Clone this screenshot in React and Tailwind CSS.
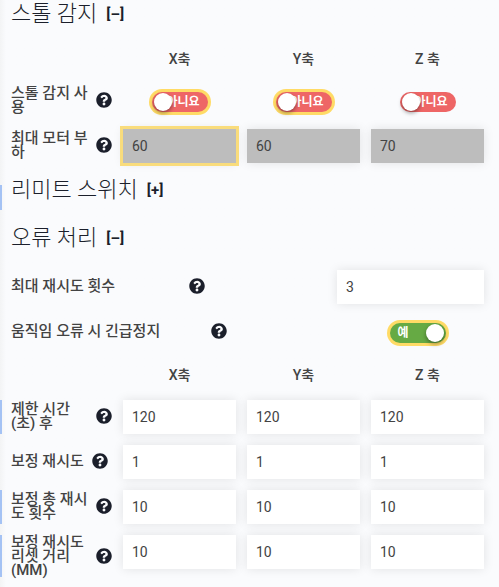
import clsx from "clsx";
import { FaQuestionCircle } from "react-icons/fa";

const AXES = ["X축", "Y축", "Z 축"];

const ROW = "border-l-2 pl-[9px] pr-[15px]";
const AXIS_GRID = "grid grid-cols-[101px_1fr_1fr_1fr] gap-x-[11px]";

function Help() {
  return (
    <button type="button" aria-label="도움말" className="shrink-0">
      <FaQuestionCircle className="block size-4 text-[#1b1f2b]" />
    </button>
  );
}

function SectionTitle({ title, open, changed, className }) {
  return (
    <div className={clsx("flex items-start gap-[9px]", className)}>
      <span className={clsx("h-[25px] w-0.5 self-end", changed && "bg-[#a4c2f4]")} />
      <button type="button" aria-expanded={open} className="flex items-center gap-[9px]">
        <h2 className="text-[22px] leading-[28px] font-light">{title}</h2>
        <span className="text-[15px] leading-[28px] font-bold">{open ? "[–]" : "[+]"}</span>
      </button>
    </div>
  );
}

function AxisHeader({ className }) {
  return (
    <div className={clsx(ROW, AXIS_GRID, "h-[34px] items-center border-transparent", className)}>
      <span />
      {AXES.map((axis) => (
        <span key={axis} className="text-center text-[14px] leading-[14px] font-medium text-[#434343]">
          {axis}
        </span>
      ))}
    </div>
  );
}

function Label({ children, className }) {
  return (
    <div className={clsx("flex min-h-[31px] items-center gap-2", className)}>
      <span className="text-[15px] leading-[14px] font-medium text-[#434343]">{children}</span>
      <Help />
    </div>
  );
}

function Field({ label, value, disabled, highlight }) {
  return (
    <input
      type="text"
      aria-label={label}
      defaultValue={value}
      disabled={disabled}
      className={clsx(
        "h-[34px] w-full min-w-0 pl-[9px] text-[14px] text-[#434343]",
        disabled ? "bg-[#bdbdbd]" : "bg-white",
        highlight
          ? "shadow-[0_0_0_3px_#f9dc7c,0_0_10px_rgba(0,0,0,0.1)]"
          : "shadow-[0_0_10px_rgba(0,0,0,0.1)]"
      )}
    />
  );
}

function Toggle({ label, on, highlight }) {
  return (
    <button
      type="button"
      role="switch"
      aria-checked={!!on}
      aria-label={label}
      className={clsx(
        "relative h-5 w-14 rounded-full text-[12px] leading-5 font-bold text-white",
        on ? "bg-[#66aa44] pl-2 text-left" : "bg-[#ee6666] pr-2 text-right",
        highlight && "shadow-[0_0_0_3px_#ffdb66]"
      )}
    >
      {on ? "예" : "아니요"}
      <span
        className={clsx(
          "absolute top-px size-[18px] rounded-full bg-white shadow-[0_2px_4px_rgba(0,0,0,0.4)]",
          on ? "right-[2px]" : "left-[2px]"
        )}
      />
    </button>
  );
}

function AxisRow({ label, values, disabled, highlight = [], changed, className }) {
  return (
    <div
      className={clsx(
        ROW,
        AXIS_GRID,
        "min-h-[34px] items-start",
        changed ? "border-[#a4c2f4]" : "border-transparent",
        className
      )}
    >
      <Label>{label}</Label>
      {values.map((value, i) => (
        <Field
          key={AXES[i]}
          label={`${label} ${AXES[i]}`}
          value={value}
          disabled={disabled}
          highlight={highlight[i]}
        />
      ))}
    </div>
  );
}

export default function App() {
  return (
    <main className="min-h-screen overflow-hidden bg-[#fafbfd] bg-linear-to-r from-[#f3f4f5] to-[#fafbfd] to-[6px] pb-2 font-[Roboto,'Noto_Sans_CJK_KR',sans-serif] text-[#1b1f2b]">
      <SectionTitle title="스톨 감지" open />
      <AxisHeader className="mt-[14px]" />
      <div className={clsx(ROW, AXIS_GRID, "mt-2 items-start border-transparent")}>
        <Label>스톨 감지 사용</Label>
        {AXES.map((axis, i) => (
          <div key={axis} className="flex h-9 items-center justify-center">
            <Toggle label={`스톨 감지 사용 ${axis}`} highlight={i < 2} />
          </div>
        ))}
      </div>
      <AxisRow
        className="mt-[9px]"
        label="최대 모터 부하"
        values={[60, 60, 70]}
        highlight={[true]}
        disabled
      />

      <SectionTitle className="mt-[13px] h-[34px]" title="리미트 스위치" changed />

      <SectionTitle className="mt-[14px]" title="오류 처리" open />
      <div className={clsx(ROW, "mt-[18px] flex items-start justify-between border-transparent")}>
        <Label className="w-[194px] justify-between">최대 재시도 횟수</Label>
        <div className="w-[147px]">
          <Field label="최대 재시도 횟수" value={3} />
        </div>
      </div>
      <div className={clsx(ROW, "mt-[11px] flex items-start justify-between border-transparent")}>
        <Label className="w-[216px] justify-between">움직임 오류 시 긴급정지</Label>
        <div className="flex h-9 w-[133px] items-center justify-center">
          <Toggle label="움직임 오류 시 긴급정지" on highlight />
        </div>
      </div>
      <AxisHeader className="mt-[7px]" />
      <AxisRow className="mt-2" label="제한 시간 (초) 후" values={[120, 120, 120]} changed />
      <AxisRow className="mt-[11px]" label="보정 재시도" values={[1, 1, 1]} />
      <AxisRow className="mt-[11px]" label="보정 총 재시도 횟수" values={[10, 10, 10]} changed />
      <AxisRow className="mt-[11px]" label="보정 재시도 리셋 거리 (MM)" values={[10, 10, 10]} changed />
    </main>
  );
}
